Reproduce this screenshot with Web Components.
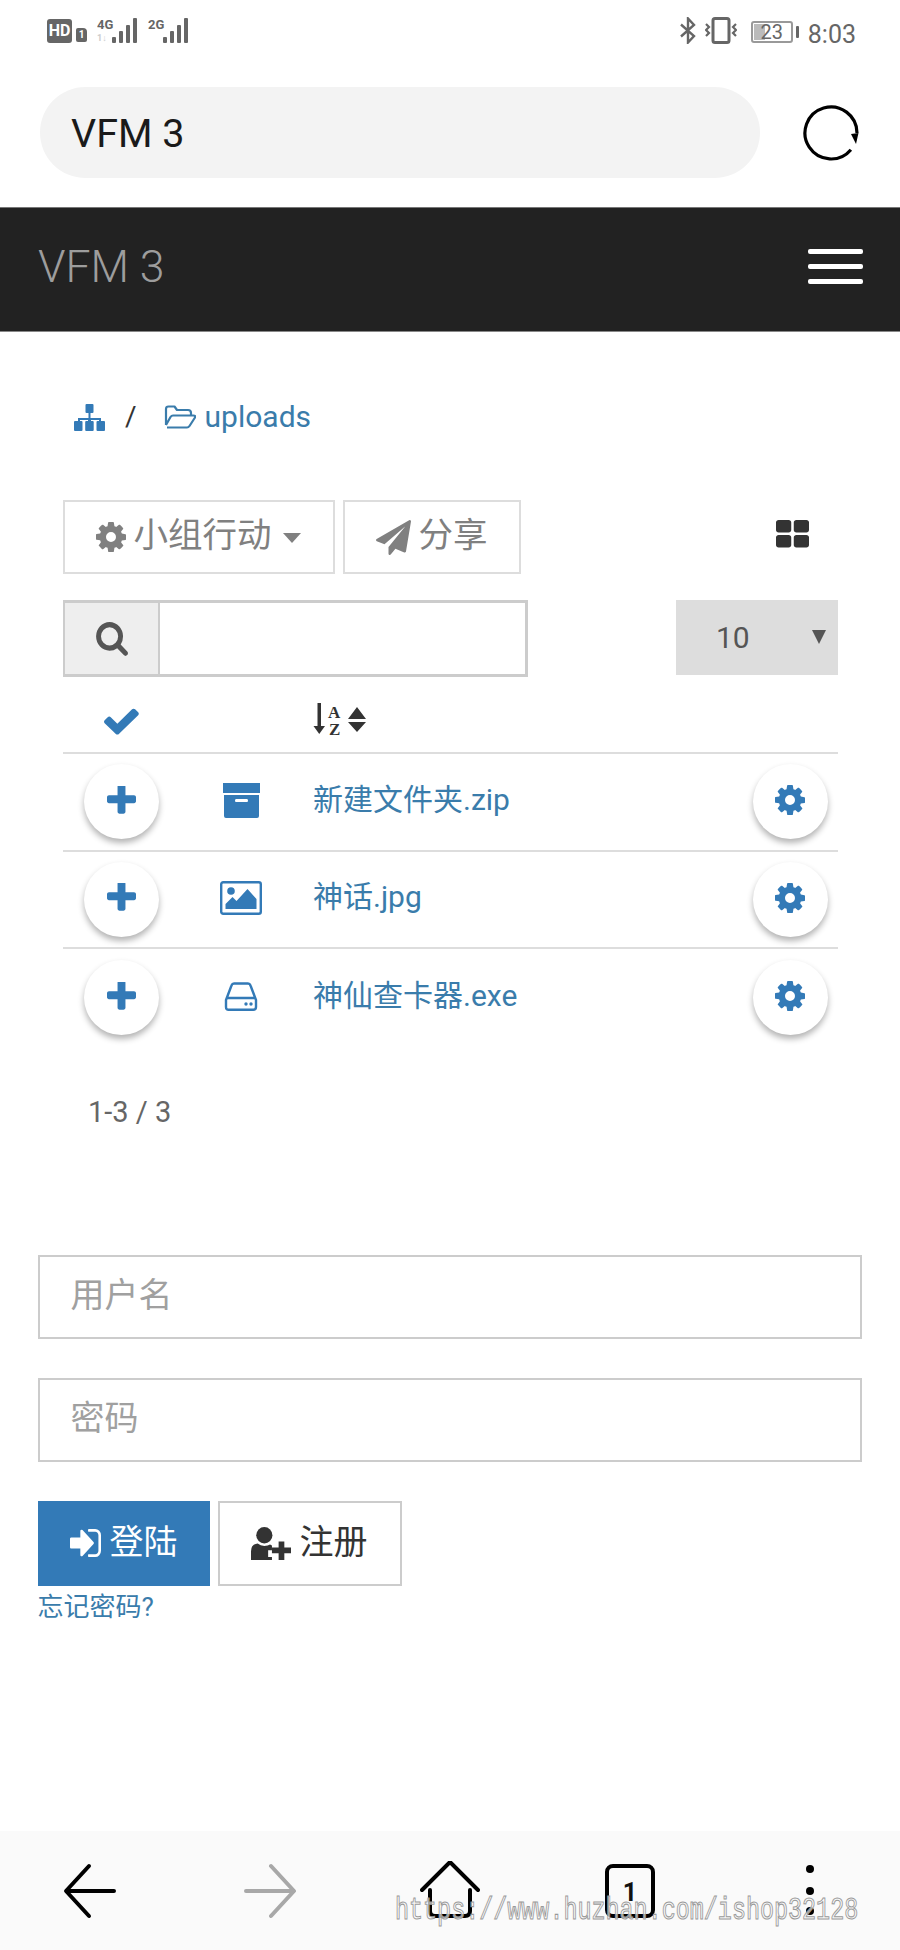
<!DOCTYPE html>
<html lang="zh">
<head>
<meta charset="utf-8">
<title>VFM 3</title>
<style>
  html, body { margin: 0; }
  body {
    width: 900px;
    height: 1950px;
    display: flex;
    flex-direction: column;
    background: #fff;
    font-family: Roboto, "Noto Sans CJK SC", sans-serif;
  }
</style>
</head>
<body>
<status-bar></status-bar>
<address-bar>VFM 3</address-bar>
<nav-bar>VFM 3</nav-bar>
<bread-crumb>uploads</bread-crumb>
<tool-bar></tool-bar>
<search-row></search-row>
<list-head></list-head>
<file-row icon="box">新建文件夹.zip</file-row>
<file-row icon="image">神话.jpg</file-row>
<file-row icon="hdd" last>神仙查卡器.exe</file-row>
<list-pager>1-3 / 3</list-pager>
<login-form></login-form>
<bottom-bar></bottom-bar>

<script>
const LINK = '#3a7cab';

// Icon shapes, name -> [viewBox, inner svg]
const ICONS = {
  cog: ['128 128 1536 1536', '<path d="M1152 896q0-106-75-181t-181-75-181 75-75 181 75 181 181 75 181-75 75-181zm512-109v222q0 12-8 23t-20 13l-185 28q-19 54-39 91 35 50 107 138 10 12 10 25t-9 23q-27 37-99 108t-94 71q-12 0-26-9l-138-108q-44 23-91 38-16 136-29 186-7 28-36 28h-222q-14 0-24.5-8.5t-11.5-21.5l-28-184q-49-16-90-37l-141 107q-10 9-25 9-14 0-25-11-126-114-165-168-7-10-7-23 0-12 8-23 15-21 51-66.5t54-70.5q-27-50-41-99l-183-27q-13-2-21-12.5t-8-23.5v-222q0-12 8-23t19-13l186-28q14-46 39-92-40-57-107-138-10-12-10-24 0-10 9-23 26-36 98.5-107.5t94.5-71.5q13 0 26 10l138 107q44-23 91-38 16-136 29-186 7-28 36-28h222q14 0 24.5 8.5t11.5 21.5l28 184q49 16 90 37l142-107q9-9 24-9 13 0 25 10 129 119 165 170 7 8 7 22 0 12-8 23-15 21-51 66.5t-54 70.5q26 50 41 98l183 28q13 2 21 12.5t8 23.5z"/>'],
  plus: ['192 192 1408 1408', '<path d="M1600 736v192q0 40-28 68t-68 28h-416v416q0 40-28 68t-68 28h-192q-40 0-68-28t-28-68v-416h-416q-40 0-68-28t-28-68v-192q0-40 28-68t68-28h416v-416q0-40 28-68t68-28h192q40 0 68 28t28 68v416h416q40 0 68 28t28 68z"/>'],
  check: ['120 300 1560 1240', '<path d="M1671 566q0 40-28 68l-724 724-136 136q-28 28-68 28t-68-28l-136-136-362-362q-28-28-28-68t28-68l136-136q28-28 68-28t68 28l294 295 656-657q28-28 68-28t68 28l136 136q28 28 28 68z"/>'],
  search: ['60 128 1670 1670', '<path d="M1216 832q0-185-131.5-316.5t-316.5-131.5-316.5 131.5-131.5 316.5 131.5 316.5 316.5 131.5 316.5-131.5 131.5-316.5zm512 832q0 52-38 90t-90 38q-54 0-90-38l-343-342q-179 124-399 124-143 0-273.5-55.5t-225-150-150-225-55.5-273.5 55.5-273.5 150-225 225-150 273.5-55.5 273.5 55.5 225 150 150 225 55.5 273.5q0 220-124 399l343 343q37 37 37 90z"/>'],
  send: ['0 0 1792 1792', '<path d="M1764 11q33 24 27 64l-256 1536q-5 29-32 45-14 8-31 8-11 0-24-5l-453-185-242 295q-18 23-49 23-13 0-22-4-19-7-30.5-23.5t-11.5-36.5v-349l864-1059-1069 925-395-162q-37-14-40-55-2-40 32-59l1664-960q15-9 32-9 20 0 36 11z"/>'],
  grid: ['64 128 1664 1536', '<path d="M832 1024v384q0 52-38 90t-90 38h-512q-52 0-90-38t-38-90v-384q0-52 38-90t90-38h512q52 0 90 38t38 90zm0-768v384q0 52-38 90t-90 38h-512q-52 0-90-38t-38-90v-384q0-52 38-90t90-38h512q52 0 90 38t38 90zm896 768v384q0 52-38 90t-90 38h-512q-52 0-90-38t-38-90v-384q0-52 38-90t90-38h512q52 0 90 38t38 90zm0-768v384q0 52-38 90t-90 38h-512q-52 0-90-38t-38-90v-384q0-52 38-90t90-38h512q52 0 90 38t38 90z"/>'],
  signin: ['0 256 1536 1280', '<path d="M1184 896q0 26-19 45l-544 544q-19 19-45 19t-45-19-19-45v-288h-448q-26 0-45-19t-19-45v-384q0-26 19-45t45-19h448v-288q0-26 19-45t45-19 45 19l544 544q19 19 19 45zm352-352v704q0 119-84.5 203.5t-203.5 84.5h-320q-13 0-22.5-9.5t-9.5-22.5q0-4-1-20t-.5-26.5 3-23.5 10-19.5 20.5-6.5h320q66 0 113-47t47-113v-704q0-66-47-113t-113-47h-288-11-13t-11.5-1-11.5-3-8-5.5-7-9-2-13.5q0-4-1-20t-.5-26.5 3-23.5 10-19.5 20.5-6.5h320q119 0 203.5 84.5t84.5 203.5z"/>'],
  sitemap: ['0 0 31 27', '<rect x="11.5" y="0" width="8" height="9" rx="1"/><rect x="14.5" y="8" width="2" height="6"/><path d="M4 19v-5h23v5h-2v-3H17v3h-3v-3H6v3z"/><rect x="0" y="17" width="8.500" height="10" rx="1"/><rect x="11.2" y="17" width="8.500" height="10" rx="1"/><rect x="22.500" y="17" width="8.500" height="10" rx="1"/>'],
  folder: ['0 0 32 24', '<path d="M2 20V4q0-2.500 2.500-2.500h6L13 5h11q3 0 3 3v2M3 22.500h20q1.500 0 2.500-1.500L31 12.500q.7-2-1.500-2H9q-1.500 0-2.500 1.500L2 20" fill="none" stroke="currentColor" stroke-width="2.200" stroke-linejoin="round"/>'],
  box: ['0 0 37 35', '<rect x="0" y="0" width="37" height="10"/><path d="M1 12h35v21q0 2-2 2H3q-2 0-2-2zM13 16q-1 0-1 1.500t1 1.500h11q1 0 1-1.500t-1-1.500z" fill-rule="evenodd"/>'],
  image: ['0 0 42 34', '<rect x="1.200" y="1.200" width="39.600" height="31.600" rx="2" fill="none" stroke="currentColor" stroke-width="2.400"/><circle cx="11" cy="10" r="3.800"/><path d="M5.500 28v-5l7-7 4 4 11-12 9 10v10z"/>'],
  hdd: ['0 0 34 29', '<path d="M2 18 7.500 3.500Q8.200 1.500 10 1.500h14q1.800 0 2.500 2L32 18v7q0 2.700-2.700 2.700H4.700Q2 27.700 2 25zM2 16h30" fill="none" stroke="currentColor" stroke-width="2.400" stroke-linejoin="round"/><circle cx="22" cy="22" r="1.700"/><circle cx="27" cy="22" r="1.700"/>'],
  userplus: ['0 0 42 34', '<circle cx="14" cy="8.500" r="8.500"/><path d="M0 34V25q0-7 7-8 3 2.500 7 2.500t6-1.500l2 1v5h-4v7h4v3z"/><path d="M29 15h6v6h7v6h-7v7h-6v-7h-7v-6h7z"/>']
};

function icon(name, width, height, color) {
  const [box, inner] = ICONS[name];
  return `<svg xmlns="http://www.w3.org/2000/svg" viewBox="${box}" width="${width}" height="${height}" preserveAspectRatio="none" style="display:block;flex:none;color:${color};fill:currentColor">${inner}</svg>`;
}

class StatusBar extends HTMLElement {
  constructor() {
    super();
    this.attachShadow({ mode: 'open' });
    const bars = [[1, 6], [8, 12], [15, 18], [22, 25]].map(([x, h]) =>
      `<rect x="${x}" y="${25 - h}" width="4" height="${h}" rx="1"/>`).join('');
    this.shadowRoot.innerHTML = `
      <style>
        :host { display: flex; flex: none; height: 60px; box-sizing: border-box; padding: 0 44px 0 47px; justify-content: space-between; align-items: flex-start; color: #666; }
        .side { display: flex; align-items: flex-start; padding-top: 17px; }
        .hd { width: 25px; height: 24px; margin-top: 2px; background: #666; border-radius: 3px; color: #fff; font: bold 16px/24px Roboto, sans-serif; text-align: center; }
        .sim { width: 11px; height: 14px; margin: 11px 10px 0 4px; background: #666; border-radius: 2px 4px 2px 2px; color: #fff; font: bold 10px/14px Roboto, sans-serif; text-align: center; }
        .net { display: block; fill: #666; }
        .net text { font: bold 13px Roboto, sans-serif; }
        .net .sub { fill: #ccc; font-size: 9px; }
        .time { font: 25px/26px Roboto, sans-serif; margin-left: 9px; color: #666; margin-top: 5px; }
        .battery { position: relative; width: 42px; height: 22px; box-sizing: border-box; border: 2px solid #999; border-radius: 3px; margin: 4px 0 0 14px; font: 20px/18px Roboto, sans-serif; text-align: center; color: #666; }
        .battery::before { content: ""; position: absolute; left: 1px; top: 1px; bottom: 1px; width: 11px; background: #bbb; }
        .battery span { position: relative; }
        .nub { width: 3px; height: 12px; background: #666; margin: 9px 0 0 3px; border-radius: 1px; }
      </style>
      <div class="side">
        <div class="hd">HD</div>
        <div class="sim">1</div>
        <svg class="net" width="42" height="27" viewBox="0 0 42 27">
          <text x="0" y="12">4G</text><text class="sub" x="0" y="24">1↓</text>
          <g transform="translate(14,1)">${bars}</g>
        </svg>
        <svg class="net" width="42" height="27" viewBox="0 0 42 27" style="margin-left:9px">
          <text x="0" y="12">2G</text>
          <g transform="translate(14,1)">${bars}</g>
        </svg>
      </div>
      <div class="side">
        <svg width="16" height="27" viewBox="0 0 16 27" fill="none" stroke="#666" stroke-width="2.400"><path d="M1 7.500 14 19 8 25.500V1.500L14 8 1 19.500"/></svg>
        <svg width="32" height="27" viewBox="0 0 32 27" fill="none" stroke="#666" stroke-width="2" style="margin-left:9px">
          <rect x="8" y="1.500" width="16" height="24" rx="2" stroke-width="3"/>
          <path d="M1 7l3 3-3 3 3 3-3 3M31 7l-3 3 3 3-3 3 3 3" stroke-width="2.200"/>
        </svg>
        <div class="battery"><span>23</span></div>
        <div class="nub"></div>
        <div class="time">8:03</div>
      </div>`;
  }
}
customElements.define('status-bar', StatusBar);

class AddressBar extends HTMLElement {
  constructor() {
    super();
    this.attachShadow({ mode: 'open' });
    this.shadowRoot.innerHTML = `
      <style>
        :host { display: flex; flex: none; height: 147px; box-sizing: border-box; padding: 27px 40px 29px; gap: 42px; align-items: center; }
        .pill { flex: none; width: 720px; height: 91px; box-sizing: border-box; padding-left: 31px; background: #f3f3f3; border-radius: 46px; font: 39.500px/93px Roboto, sans-serif; color: #1a1a1a; }
        svg { display: block; flex: none; margin-left: -1px; }
      </style>
      <div class="pill"><slot></slot></div>
      <svg width="60" height="60" viewBox="0 0 60 60" fill="none">
        <path d="M49.900 46.700A26 26 0 1 1 56 30" stroke="#000" stroke-width="3.200"/>
        <path d="M50 31 57.500 30 55 41z" fill="#000"/>
      </svg>`;
  }
}
customElements.define('address-bar', AddressBar);

class NavBar extends HTMLElement {
  constructor() {
    super();
    this.attachShadow({ mode: 'open' });
    this.shadowRoot.innerHTML = `
      <style>
        :host { display: flex; flex: none; height: 125px; box-sizing: border-box; padding: 0 37px 0 38px; justify-content: space-between; align-items: center; background: #222; border-top: 1px solid #777; border-bottom: 1px solid #888; }
        .brand { font: 300 44.500px/1 Roboto, sans-serif; color: #9d9d9d; margin-top: -4px; }
        .toggle { display: flex; flex-direction: column; gap: 10px; width: 55px; margin-top: -6px; }
        .toggle i { display: block; height: 5px; border-radius: 2px; background: #fff; }
      </style>
      <div class="brand"><slot></slot></div>
      <div class="toggle"><i></i><i></i><i></i></div>`;
  }
}
customElements.define('nav-bar', NavBar);

class BreadCrumb extends HTMLElement {
  constructor() {
    super();
    this.attachShadow({ mode: 'open' });
    this.shadowRoot.innerHTML = `
      <style>
        :host { display: flex; flex: none; box-sizing: border-box; height: 168px; padding: 68px 0 0 74px; align-items: flex-start; font: 30px/34px Roboto, sans-serif; color: ${LINK}; }
        .sep { color: #333; margin: 0 27px 0 20px; font-size: 28px; }
        .ico { height: 34px; display: flex; align-items: center; }
        .label { margin-left: 9px; }
      </style>
      <div class="ico">${icon('sitemap', 31, 27, '#337ab7')}</div>
      <div class="sep">/</div>
      <div class="ico">${icon('folder', 32, 24, LINK)}</div>
      <div class="label"><slot></slot></div>`;
  }
}
customElements.define('bread-crumb', BreadCrumb);

class ToolBar extends HTMLElement {
  constructor() {
    super();
    this.attachShadow({ mode: 'open' });
    this.shadowRoot.innerHTML = `
      <style>
        :host { display: flex; flex: none; height: 74px; margin: 0 0 26px 63px; width: 775px; align-items: stretch; color: #808080; font: 34.500px/1 Roboto, "Noto Sans CJK SC", sans-serif; }
        .btn { display: flex; align-items: center; box-sizing: border-box; border: 2.500px solid #ddd; }
        .group { width: 272px; padding-left: 30.500px; }
        .share { width: 178px; margin-left: 8px; padding-left: 30.500px; }
        .group span { margin-left: 8px; margin-top: -3px; }
        .share span { margin-left: 8px; margin-top: -3px; }
        .caret { width: 0; height: 0; margin-left: 11px; margin-top: 1px; border: 9px solid transparent; border-top: 10px solid #808080; border-bottom: 0; }
        .view { margin-left: auto; margin-right: 29px; align-self: center; margin-top: -5px; }
      </style>
      <div class="btn group">${icon('cog', 30, 30, '#808080')}<span>小组行动</span><i class="caret"></i></div>
      <div class="btn share">${icon('send', 35, 35, '#808080')}<span>分享</span></div>
      <div class="view">${icon('grid', 33, 30, '#333')}</div>`;
  }
}
customElements.define('tool-bar', ToolBar);

class SearchRow extends HTMLElement {
  constructor() {
    super();
    this.attachShadow({ mode: 'open' });
    this.shadowRoot.innerHTML = `
      <style>
        :host { display: flex; flex: none; height: 77px; margin-left: 63px; width: 775px; justify-content: space-between; }
        .search { display: flex; width: 465px; box-sizing: border-box; border: 3px solid #ccc; border-left-width: 2px; }
        .addon { display: flex; flex: none; width: 93px; align-items: center; justify-content: center; background: #eee; border-right: 2px solid #ccc; }
        .field { flex: 1; background: #fff; }
        .select { display: flex; box-sizing: border-box; width: 162px; height: 75px; align-items: center; padding: 0 12px 0 40px; justify-content: space-between; background: #ddd; color: #555; font: 30px/1 Roboto, sans-serif; }
        .arrow { width: 0; height: 0; border: 7.500px solid transparent; border-top: 14px solid #555; border-bottom: 0; margin-top: -2px; }
      </style>
      <div class="search"><div class="addon">${icon('search', 32, 34, '#555')}</div><div class="field"></div></div>
      <div class="select"><span>10</span><i class="arrow"></i></div>`;
  }
}
customElements.define('search-row', SearchRow);

class ListHead extends HTMLElement {
  constructor() {
    super();
    this.attachShadow({ mode: 'open' });
    this.shadowRoot.innerHTML = `
      <style>
        :host { display: grid; flex: none; grid-template-columns: 117px 133px 1fr; box-sizing: border-box; height: 77px; margin-left: 63px; width: 775px; align-items: start; border-bottom: 2px solid #ddd; }
        .check { justify-self: center; padding-top: 31px; }
        .sort { grid-column: 3; margin-top: 26px; display: block; }
        text { font: bold 17px "Liberation Serif", serif; fill: #333; }
      </style>
      <div class="check">${icon('check', 35, 27, '#337ab7')}</div>
      <svg class="sort" width="54" height="34" viewBox="0 0 54 34">
        <path d="M4.500 0h3.500v23h4L6.250 31 0.500 23h4z" fill="#333"/>
        <text x="15" y="15">A</text><text x="16" y="32">Z</text>
        <path d="M35 16 44 4 53 16zM35 19H53L44 29z" fill="#333"/>
      </svg>`;
  }
}
customElements.define('list-head', ListHead);

class FileRow extends HTMLElement {
  constructor() {
    super();
    this.attachShadow({ mode: 'open' });
    const sizes = { box: [37, 35], image: [42, 34], hdd: [34, 29] };
    const kind = this.getAttribute('icon');
    this.shadowRoot.innerHTML = `
      <style>
        :host { display: grid; flex: none; grid-template-columns: 117px 122px 1fr 96px; box-sizing: border-box; height: 97.500px; margin-left: 63px; width: 775px; align-items: center; border-bottom: 2px solid #ddd; color: ${LINK}; font: 30px/1.2 Roboto, "Noto Sans CJK SC", sans-serif; }
        :host([last]) { border-bottom: 0; }
        .round { display: flex; width: 75px; height: 75px; justify-self: center; align-items: center; justify-content: center; border-radius: 50%; background: #fff; box-shadow: 0 4px 6px rgba(0,0,0,.3); }
        .kind { justify-self: center; margin-top: -3px; }
        .name { padding-left: 11px; margin-top: -4px; }
        .round svg { margin-top: -3px; }
      </style>
      <div class="round">${icon('plus', 29, 29, '#337ab7')}</div>
      <div class="kind">${icon(kind, sizes[kind][0], sizes[kind][1], '#337ab7')}</div>
      <div class="name"><slot></slot></div>
      <div class="round">${icon('cog', 30, 30, '#337ab7')}</div>`;
  }
}
customElements.define('file-row', FileRow);

class ListPager extends HTMLElement {
  constructor() {
    super();
    this.attachShadow({ mode: 'open' });
    this.shadowRoot.innerHTML = `
      <style>
        :host { display: block; flex: none; padding: 48px 0 0 88px; font: 29px/34px Roboto, sans-serif; color: #666; }
      </style>
      <slot></slot>`;
  }
}
customElements.define('list-pager', ListPager);

class LoginForm extends HTMLElement {
  constructor() {
    super();
    this.attachShadow({ mode: 'open' });
    this.shadowRoot.innerHTML = `
      <style>
        :host { display: flex; flex: none; flex-direction: column; box-sizing: border-box; width: 824.500px; margin: 126px 0 0 37.500px; font: 34px/1 Roboto, "Noto Sans CJK SC", sans-serif; }
        .field { box-sizing: border-box; height: 84px; padding-left: 31px; border: 2.500px solid #ccc; line-height: 76px; color: #a0a0a0; margin-bottom: 39px; }
        .actions { display: flex; gap: 8px; }
        .btn { display: flex; box-sizing: border-box; height: 85px; align-items: center; }
        .btn span { margin-top: -3px; }
        .login { width: 172px; padding-left: 32px; gap: 9px; background: #337ab7; color: #fff; }
        .register { width: 184px; padding-left: 31px; gap: 9px; border: 2.500px solid #ccc; color: #333; }
        .forgot { margin-top: 5px; font-size: 26px; line-height: 32px; color: ${LINK}; }
      </style>
      <div class="field">用户名</div>
      <div class="field">密码</div>
      <div class="actions">
        <div class="btn login">${icon('signin', 31, 28, '#fff')}<span>登陆</span></div>
        <div class="btn register">${icon('userplus', 40, 33, '#333')}<span>注册</span></div>
      </div>
      <div class="forgot">忘记密码?</div>`;
  }
}
customElements.define('login-form', LoginForm);

class BottomBar extends HTMLElement {
  constructor() {
    super();
    this.attachShadow({ mode: 'open' });
    this.shadowRoot.innerHTML = `
      <style>
        :host { display: grid; flex: none; position: relative; grid-template-columns: repeat(5, 1fr); height: 119px; margin-top: auto; background: #fafafa; justify-items: center; padding-top: 30px; box-sizing: border-box; }
        svg { display: block; }
        .stroke { fill: none; stroke: #000; stroke-width: 4; stroke-linecap: round; stroke-linejoin: round; }
        .tab { font: bold 25px Roboto, sans-serif; fill: #111; }
        .dots { margin-left: 2px; }
        .mark { position: absolute; left: 395px; top: 71px; font: 23.400px/26px "Liberation Mono", monospace; color: rgba(250,250,250,.7); -webkit-text-stroke: .8px #999; white-space: nowrap; transform: scaleY(1.35); transform-origin: 0 100%; }
      </style>
      <svg width="60" height="60" viewBox="0 0 60 60"><path class="stroke" d="M54 30H7M29 5 6 30 29 55"/></svg>
      <svg width="60" height="60" viewBox="0 0 60 60"><path class="stroke" style="stroke:#a8a8a8" d="M6 30H53M31 5 54 30 31 55"/></svg>
      <svg width="60" height="60" viewBox="0 0 60 60"><path class="stroke" d="M2 29 30 1 58 29M10 29V50Q10 55 15 55H45Q50 55 50 50V29"/></svg>
      <svg width="60" height="60" viewBox="0 0 60 60"><rect class="stroke" x="7" y="5" width="46" height="50" rx="6"/><text class="tab" x="30" y="40" text-anchor="middle">1</text></svg>
      <svg class="dots" width="60" height="60" viewBox="0 0 60 60"><circle cx="29" cy="8" r="4"/><circle cx="29" cy="30" r="4"/><circle cx="29" cy="50" r="4"/></svg>
      <div class="mark">https://www.huzhan.com/ishop32128</div>`;
  }
}
customElements.define('bottom-bar', BottomBar);
</script>
</body>
</html>
